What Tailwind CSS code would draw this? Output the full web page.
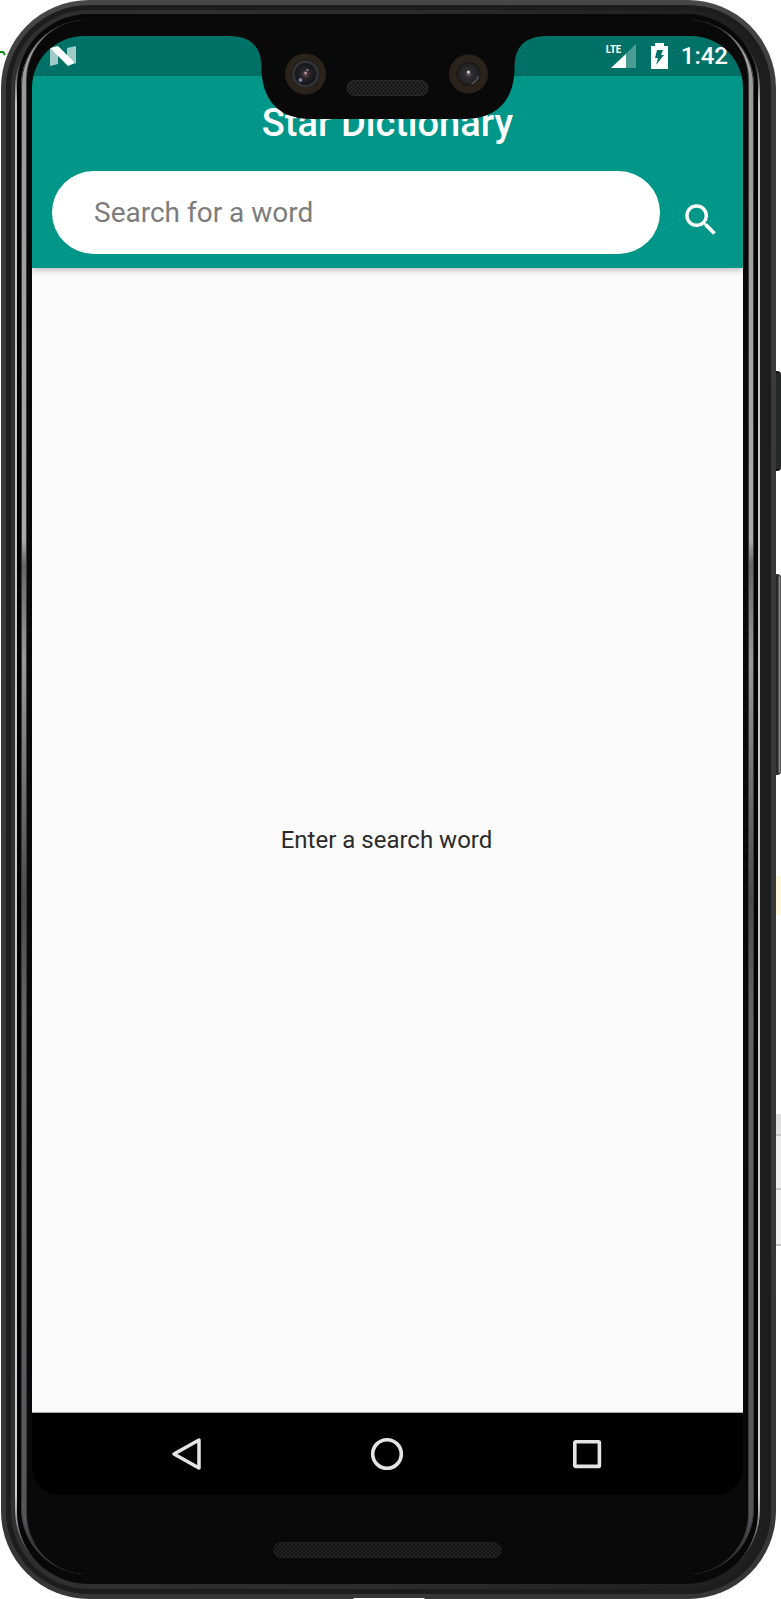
<!DOCTYPE html>
<html lang="en">
<head>
<meta charset="utf-8">
<meta name="viewport" content="width=device-width, initial-scale=1">
<title>Star Dictionary</title>
<script src="https://cdn.jsdelivr.net/npm/@tailwindcss/browser@4"></script>
</head>
<body class="relative flex min-h-screen bg-white pl-px font-['Roboto',sans-serif]">
  <svg class="absolute left-0 top-[50px]" width="7" height="7" viewBox="0 0 7 7" aria-hidden="true"><path d="M0 2H3L5 5" fill="none" stroke="#0a8a0a" stroke-width="2"/></svg>

  <!-- Phone body: nested rings from the metal rim to the glass -->
  <div class="relative flex min-w-0 flex-1 rounded-[88px] bg-[linear-gradient(#484848,#3a3a3a_90px,#363636)] p-[5px]">
    <div class="flex min-w-0 flex-1 rounded-[83px] bg-[#1d1d1d] p-[5px]">
      <div class="flex min-w-0 flex-1 rounded-[78px] bg-[linear-gradient(90deg,#303030,#2c2c2c_50%,#1e1e1e)] pt-[4px] pr-[6px] pb-[5px] pl-[4px]">
        <div class="flex min-w-0 flex-1 rounded-[74px] bg-[linear-gradient(#0a0a0a,#3a3a3a_50px,#c4c4c4_90px,#d0d0d0_1480px,#222_1550px)] px-[2px]">
          <div class="flex min-w-0 flex-1 rounded-[72px] bg-[linear-gradient(#090909,#040404_90px,#040404_1480px,#090909)] px-[4px] pt-[6px] pb-[10px]">
            <div class="flex min-w-0 flex-1 rounded-[66px] bg-[linear-gradient(#222,#bbb_20px,#999_60px,#aaa_520px,#666_545px,#999_640px,#4a4a4a_880px,#666_1000px,#55555a_1500px,#151515)] px-[6px] shadow-[inset_1px_0_#3a3a3a,inset_-1px_0_#3a3a3a]">
              <div class="flex min-w-0 flex-1 flex-col rounded-[60px] bg-[#090909] px-[5px] pt-[16px] shadow-[1px_0_#3a3a3a,-1px_0_#3a3a3a]">

                <!-- Screen -->
                <div class="relative flex flex-1 flex-col overflow-hidden rounded-t-[52px] rounded-b-[28px]">
                  <div class="flex h-10 items-center bg-[#007167] pr-[15px] pl-[18px] text-white">
                    <svg width="26" height="20" viewBox="0 0 26 20" role="img" aria-label="Android N"><path d="M0 2L8 9V18L0 20ZM17 2L26 0V18L17 11Z" fill="#a0cbc6"/><path d="M0 2L8 0L25 17L18 20Z" fill="#fff"/></svg>
                    <div class="relative ml-auto h-6 w-[30px]">
                      <svg class="ml-auto" width="25" height="24" viewBox="0 0 25 24" role="img" aria-label="Signal"><path d="M25 0V24H0Z" fill="#4c9c95"/><path d="M15 10V24H0Z" fill="#fff"/><path d="M0 0H11V11H0Z" fill="#007167"/></svg>
                      <span class="absolute top-0 left-0 font-['Roboto_Condensed','Roboto',sans-serif] text-[11px] leading-3 font-bold">LTE</span>
                    </div>
                    <svg class="ml-[15px]" width="17" height="26" viewBox="0 0 17 26" role="img" aria-label="Charging"><path d="M4 0H13V3H17V26H0V3H4Z" fill="#fff"/><path d="M6 7H12L10 12H13L5 22L7 15H4Z" fill="#007167"/></svg>
                    <time class="ml-[13px] text-2xl font-medium">1:42</time>
                  </div>

                  <header class="relative z-10 bg-[#009688] shadow-[0_2px_6px_rgba(0,0,0,0.25)]">
                    <h1 class="pt-6 text-center text-[38px] leading-[46px] font-medium text-white">Star Dictionary</h1>
                    <form class="flex items-end pl-5">
                      <input type="text" aria-label="Search for a word" placeholder="Search for a word" class="mt-[25px] mb-[14px] h-[83px] min-w-0 flex-1 rounded-full bg-white px-[42px] text-[28px] text-[#212121] outline-none placeholder:text-[#7c7c7c]">
                      <button type="button" aria-label="Search" class="flex h-[96px] w-[83px] items-center justify-center pr-[2px]">
                        <svg width="42" height="42" viewBox="0 0 24 24" fill="#fff" aria-hidden="true"><path d="M15.5 14h-.79l-.28-.27A6.471 6.471 0 0 0 16 9.5 6.5 6.5 0 1 0 9.5 16c1.61 0 3.09-.59 4.23-1.57l.27.28v.79l5 4.99L20.49 19l-4.99-5zm-6 0C7.01 14 5 11.99 5 9.5S7.01 5 9.5 5 14 7.01 14 9.5 11.99 14 9.5 14z"/></svg>
                      </button>
                    </form>
                  </header>

                  <main class="flex flex-1 items-center justify-center border-b border-[#aaa] bg-[#fafafa] pr-[2px] text-2xl text-[#2a2a2a]">
                    <p>Enter a search word</p>
                  </main>

                  <nav class="flex h-[82px] justify-center bg-black pr-[2px]" aria-label="System navigation">
                    <button type="button" aria-label="Back" class="flex w-[200px] items-center justify-center"><svg width="32" height="34" viewBox="0 0 32 34" aria-hidden="true"><path d="M28 3V31L3 17Z" fill="none" stroke="#e4e4e4" stroke-width="3.500" stroke-linejoin="round"/></svg></button>
                    <button type="button" aria-label="Home" class="flex w-[200px] items-center justify-center"><svg width="34" height="34" viewBox="0 0 34 34" aria-hidden="true"><circle cx="17" cy="17" r="14.3" fill="none" stroke="#e4e4e4" stroke-width="3.600"/></svg></button>
                    <button type="button" aria-label="Recent apps" class="flex w-[200px] items-center justify-center"><svg width="30" height="30" viewBox="0 0 30 30" aria-hidden="true"><rect x="2.8" y="2.8" width="24.6" height="24.6" rx="1" fill="none" stroke="#e4e4e4" stroke-width="3.600"/></svg></button>
                  </nav>

                  <!-- Notch with cameras and earpiece -->
                  <svg class="absolute top-0 left-1/2 z-20 -translate-x-1/2" width="319" height="83" viewBox="0 0 319 83" aria-hidden="true">
                    <defs>
                      <pattern id="mesh" width="4" height="4" patternUnits="userSpaceOnUse"><rect width="4" height="4" fill="#131313"/><circle cx="1" cy="1" r=".8" fill="#484848"/><circle cx="3" cy="3" r=".8" fill="#484848"/></pattern>
                      <radialGradient id="lens"><stop offset="0" stop-color="#6b5558"/><stop offset=".3" stop-color="#2c2629"/><stop offset=".7" stop-color="#15171b"/><stop offset=".9" stop-color="#3b3d40"/><stop offset="1" stop-color="#17140f"/></radialGradient>
                      <radialGradient id="lens2"><stop offset="0" stop-color="#6b5f60"/><stop offset=".3" stop-color="#302d30"/><stop offset=".8" stop-color="#222225"/><stop offset="1" stop-color="#17140f"/></radialGradient>
                    </defs>
                    <path d="M0 0C24 0 33 12 33 32C33 62 49 83 82 83H237C270 83 286 62 286 32C286 12 295 0 319 0Z" fill="#090909"/>
                    <circle cx="77" cy="38" r="20.5" fill="#2a231c"/><circle cx="77" cy="38" r="14" fill="url(#lens)"/><circle cx="77" cy="37" r="1.2" fill="#c8a8a8"/><circle cx="72" cy="44" r="2" fill="#7c7f9e"/><circle cx="79" cy="34" r="1" fill="#999"/>
                    <circle cx="240" cy="38" r="19.5" fill="#2a231c"/><circle cx="240" cy="38" r="12" fill="url(#lens2)"/><circle cx="240" cy="36" r="1.6" fill="#e0cccc"/><path d="M243 48Q249 45 250 40" fill="none" stroke="#555" stroke-width="1.5"/>
                    <rect x="118.500" y="44.500" width="81" height="15" rx="7.500" fill="url(#mesh)" stroke="#2b2b2b"/>
                  </svg>
                </div>

                <!-- Chin speaker -->
                <div class="flex h-[79px] justify-center pt-[47px]">
                  <svg width="229" height="16" viewBox="0 0 229 16" aria-hidden="true"><defs><pattern id="grille" width="4" height="4" patternUnits="userSpaceOnUse"><rect width="4" height="4" fill="#121212"/><circle cx="1" cy="1" r=".8" fill="#393939"/><circle cx="3" cy="3" r=".8" fill="#393939"/></pattern></defs><rect x=".5" y=".5" width="228" height="15" rx="7.500" fill="url(#grille)" stroke="#1d1d1d"/></svg>
                </div>
              </div>
            </div>
          </div>
        </div>
      </div>
    </div>
    <div class="absolute bottom-0 left-1/2 h-px w-[71px] -translate-x-1/2 bg-white"></div>
  </div>

  <!-- Side keys and the window edge behind the phone -->
  <div class="flex w-[5px] shrink-0 flex-col" aria-hidden="true">
    <div class="mt-[371px] h-[100px] rounded-r-sm border-y-2 border-[#111] bg-[#262828]"></div>
    <div class="mt-[103px] h-[201px] rounded-r-sm border-y-2 border-[#333] bg-[linear-gradient(90deg,#222,#333_40%,#888_70%,#444)]"></div>
    <div class="mt-[101px] h-[39px] bg-[#fff8dc]"></div>
    <div class="mt-[199px] h-[22px] border-b-2 border-[#c8c8c8] bg-[#e0e0e0]"></div>
    <div class="h-[54px] border-b-2 border-[#c8c8c8] bg-[#ededed]"></div>
    <div class="h-[56px] border-b-2 border-[#c8c8c8] bg-[#f0f0f0]"></div>
  </div>
</body>
</html>
